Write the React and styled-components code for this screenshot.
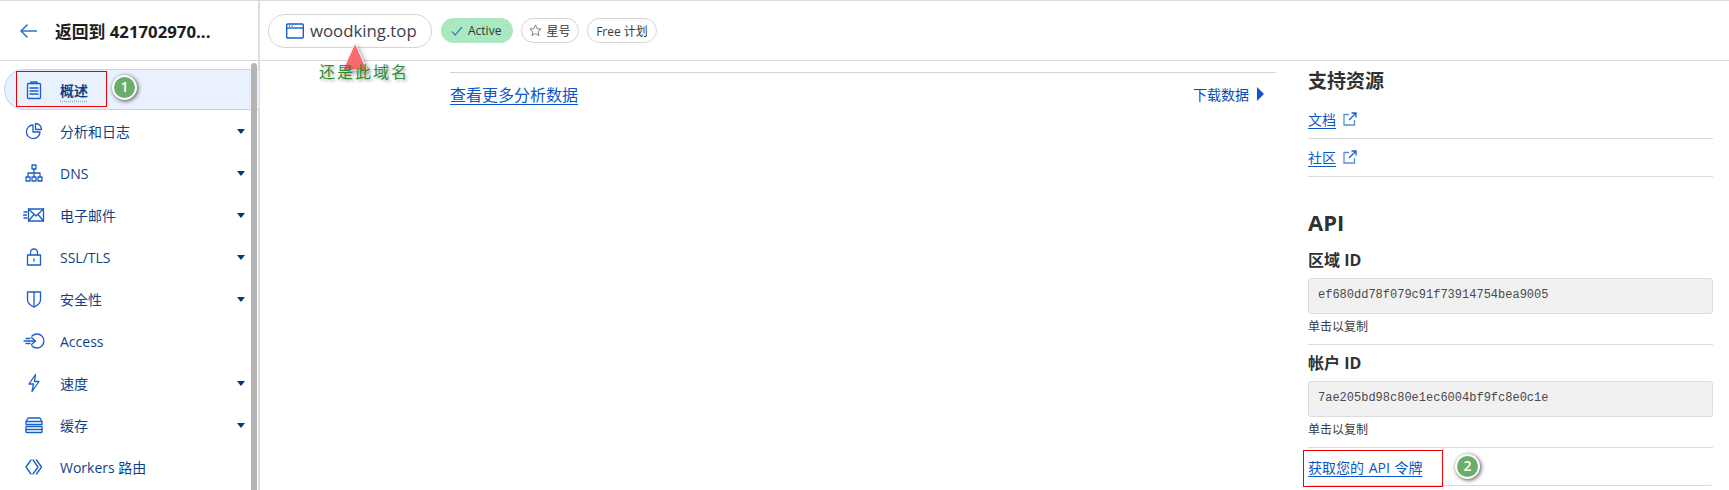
import React from 'react'
import styled, { createGlobalStyle } from 'styled-components'

const GlobalStyle = createGlobalStyle`
  html, body {
    margin: 0;
    padding: 0;
    background: #fff;
    overflow: hidden;
  }
  * {
    box-sizing: border-box;
  }
  #root {
    font-family: 'Open Sans', 'Noto Sans CJK SC', sans-serif;
  }
`

const Svg = ({ children, w = 20, h = 20, box = '0 0 20 20' }) => (
  <svg width={w} height={h} viewBox={box} fill="none" stroke="#1a5fc8" strokeWidth="1.3" strokeLinecap="round" strokeLinejoin="round">
    {children}
  </svg>
)

const icons = {
  overview: (
    <Svg>
      <rect x="3.5" y="3.5" width="13" height="15" rx="1" />
      <path d="M7 3.5V2h6v1.5M6 8h8M6 11h8M6 14h8" />
    </Svg>
  ),
  chart: (
    <Svg>
      <path d="M9 4a6.800 6.800 0 1 0 7 7H9z" />
      <path d="M11.500 2.500a6 6 0 0 1 6 6h-6z" />
    </Svg>
  ),
  dns: (
    <Svg>
      <rect x="8" y="2" width="4" height="4" />
      <rect x="2" y="14" width="4" height="4" />
      <rect x="8" y="14" width="4" height="4" />
      <rect x="14" y="14" width="4" height="4" />
      <path d="M10 6v8M4 14v-4h12v4" />
    </Svg>
  ),
  mail: (
    <Svg w={22} box="0 0 22 20">
      <rect x="5.5" y="4" width="15" height="12" />
      <path d="M5.5 4l7.5 7 7.5-7M5.5 16l5.5-6.500M20.500 16L15 9.500M1 7h3M0.500 10h3M1 13h3" />
    </Svg>
  ),
  lock: (
    <Svg>
      <rect x="3.500" y="8" width="13" height="10" />
      <path d="M6.500 8V5.500a3.500 3.500 0 0 1 7 0V8M10 12v2" />
    </Svg>
  ),
  shield: (
    <Svg>
      <path d="M3.500 3h13v7.500c0 3.500-3 6-6.500 7.500-3.500-1.500-6.500-4-6.500-7.500z" />
      <path d="M10 3v15" />
    </Svg>
  ),
  access: (
    <Svg w={22} box="0 0 22 20">
      <path d="M9 5a7 7 0 1 1 0 10M1 10h11M8.500 6.500L12.500 10l-4 3.500M3 7.500h4M3 12.500h4" />
    </Svg>
  ),
  bolt: (
    <Svg>
      <path d="M11.500 1.500L5 11h4.500L8 18.500 15 8.500h-4.500z" />
    </Svg>
  ),
  cache: (
    <Svg>
      <path d="M4 3h12l2 3.500V9.500H2V6.500zM2 6.500h16" />
      <rect x="2" y="11.500" width="16" height="6" rx="0.500" />
      <path d="M2 14.500h16" />
    </Svg>
  ),
  workers: (
    <Svg>
      <path d="M7 3l-5 7 5 7M9 3l5 7-5 7M12.500 3l5 7-5 7" />
    </Svg>
  ),
}

const navItems = [
  { label: '概述', icon: 'overview', active: true },
  { label: '分析和日志', icon: 'chart', caret: true },
  { label: 'DNS', icon: 'dns', caret: true },
  { label: '电子邮件', icon: 'mail', caret: true },
  { label: 'SSL/TLS', icon: 'lock', caret: true },
  { label: '安全性', icon: 'shield', caret: true },
  { label: 'Access', icon: 'access' },
  { label: '速度', icon: 'bolt', caret: true },
  { label: '缓存', icon: 'cache', caret: true },
  { label: 'Workers 路由', icon: 'workers' },
]

const ExternalIcon = () => (
  <svg width="14" height="14" viewBox="0 0 14 14" fill="none" stroke="#5b8fdc" strokeWidth="1.300">
    <path d="M6 2.500H1v10.500h10.500V8" />
    <path d="M6 8l7-7M8.500 1H13v4.500" stroke="#1a5fc8" />
  </svg>
)

const App = () => {
  return (
    <>
      <GlobalStyle />
      <Page>
        <Sidebar>
          <BackRow>
            <svg width="20" height="16" viewBox="0 0 20 16" fill="none" stroke="#2f6fd0" strokeWidth="1.500">
              <path d="M18 8H2M8.500 1.500L2 8l6.500 6.500" />
            </svg>
            <BackText>返回到 421702970...</BackText>
          </BackRow>
          <NavList>
            {navItems.map((item) => (
              <NavItem key={item.label} $active={item.active}>
                <NavIcon>{icons[item.icon]}</NavIcon>
                <NavLabel $active={item.active}>{item.label}</NavLabel>
                {item.caret && <Caret />}
              </NavItem>
            ))}
            <Scrollbar />
          </NavList>
        </Sidebar>
        <Body>
          <TopBar>
            <DomainChip>
              <svg width="18" height="16" viewBox="0 0 18 16" fill="none" stroke="#1a5fc8" strokeWidth="1.400">
                <rect x="0.700" y="1" width="16.600" height="14" rx="1" />
                <path d="M0.700 5h16.600" />
                <path d="M3 3h1M5.500 3h1" />
              </svg>
              woodking.top
            </DomainChip>
            <ActiveChip>
              <svg width="12" height="10" viewBox="0 0 12 10" fill="none" stroke="#1a5fc8" strokeWidth="1.100">
                <path d="M1 5.500L4.200 9 11 1" />
              </svg>
              Active
            </ActiveChip>
            <Chip $w={58}>
              <svg width="13" height="13" viewBox="0 0 14 14" fill="none" stroke="#777" strokeWidth="1">
                <path d="M7 1l1.800 4 4.200.400-3.200 2.800 1 4.300L7 10.200 3.200 12.500l1-4.300L1 5.400l4.200-.400z" />
              </svg>
              星号
            </Chip>
            <Chip $w={70}>Free 计划</Chip>
          </TopBar>
          <Content>
            <MainColumn>
              <MainRow>
                <MainLink>查看更多分析数据</MainLink>
                <DownloadLink>
                  下载数据
                  <DownloadArrow />
                </DownloadLink>
              </MainRow>
            </MainColumn>
            <SideColumn>
              <SectionTitle>支持资源</SectionTitle>
              <ResourceRow>
                <SideLink>文档</SideLink>
                <ExternalIcon />
              </ResourceRow>
              <ResourceRow>
                <SideLink>社区</SideLink>
                <ExternalIcon />
              </ResourceRow>
              <ApiTitle>API</ApiTitle>
              <IdBlock>
                <IdTitle>区域 ID</IdTitle>
                <IdBox>ef680dd78f079c91f73914754bea9005</IdBox>
                <IdHint>单击以复制</IdHint>
              </IdBlock>
              <IdBlock>
                <IdTitle>帐户 ID</IdTitle>
                <IdBox>7ae205bd98c80e1ec6004bf9fc8e0c1e</IdBox>
                <IdHint>单击以复制</IdHint>
              </IdBlock>
              <TokenRow>
                <TokenLink>获取您的 API 令牌</TokenLink>
              </TokenRow>
            </SideColumn>
          </Content>
        </Body>

        <RedBox $x={16} $y={71} $w={91} $h={36} />
        <Badge $x={112} $y={75}>1</Badge>
        <RedBox $x={1303} $y={450} $w={140} $h={37} />
        <Badge $x={1455} $y={454}>2</Badge>
        <PointerArrow viewBox="0 0 30 32" width="30" height="32">
          <path d="M15 1L28 30Q15 26 2 30Z" fill="#f96b6e" stroke="#fff" strokeWidth="1" />
        </PointerArrow>
        <Note>还是此域名</Note>
      </Page>
    </>
  )
}

export default App

const Page = styled.div`
  position: relative;
  display: flex;
  width: 1729px;
  height: 490px;
  overflow: hidden;
  border-top: 1px solid #d9d9d9;
`
const Sidebar = styled.aside`
  flex: none;
  width: 260px;
  border-right: 2px solid #dcdcdc;
  display: flex;
  flex-direction: column;
`
const BackRow = styled.div`
  display: flex;
  align-items: center;
  gap: 16px;
  height: 60px;
  padding-left: 19px;
  border-bottom: 1px solid #d9d9d9;
`
const BackText = styled.div`
  font-size: 16.800px;
  font-weight: 700;
  color: #1d1d1d;
  white-space: nowrap;
`
const NavList = styled.nav`
  position: relative;
  flex: 1;
  padding: 8px 0 0 4px;
`
const NavItem = styled.div`
  display: flex;
  align-items: center;
  height: 42px;
  padding-left: 21px;
  padding-right: 13px;
  margin-right: -1px;
  ${({ $active }) =>
    $active &&
    `
    height: 41px;
    background: #e8f1fd;
    border: 1px solid #bcd6f7;
    border-right: none;
    border-radius: 21px 0 0 21px;
    padding-left: 20px;
  `}
`
const NavIcon = styled.span`
  display: flex;
  justify-content: center;
  width: 22px;
  margin-right: 15px;
  margin-left: -2px;
`
const NavLabel = styled.span`
  flex: 1;
  font-size: 14px;
  color: #0f3f87;
  font-weight: ${({ $active }) => ($active ? 600 : 400)};
  white-space: nowrap;
  ${({ $active }) =>
    $active &&
    `
    text-decoration: underline dotted #8ab0e8;
    text-underline-offset: 5px;
  `}
`
const Caret = styled.span`
  width: 0;
  height: 0;
  border-left: 4px solid transparent;
  border-right: 4px solid transparent;
  border-top: 5px solid #003681;
  margin-right: 1px;
`
const Scrollbar = styled.div`
  position: absolute;
  top: 2px;
  bottom: 0;
  right: 1px;
  width: 6px;
  border-radius: 3px 3px 0 0;
  background: #b5b5b5;
`
const Body = styled.main`
  flex: 1;
  display: flex;
  flex-direction: column;
  min-width: 0;
`
const TopBar = styled.header`
  display: flex;
  align-items: center;
  gap: 8px;
  height: 60px;
  padding: 0 0 0 8px;
  border-bottom: 1px solid #d9d9d9;
`
const Chip = styled.span`
  display: inline-flex;
  align-items: center;
  justify-content: center;
  gap: 4px;
  width: ${({ $w }) => $w}px;
  height: 25px;
  border: 1px solid #d5d5d5;
  border-radius: 13px;
  font-size: 12px;
  color: #3a3a3a;
  white-space: nowrap;
`
const DomainChip = styled(Chip)`
  justify-content: flex-start;
  gap: 6px;
  width: 164px;
  height: 34px;
  padding: 0 0 0 17px;
  border-radius: 17px;
  font-size: 16.800px;
  color: #3b4151;
  margin-right: 1px;
`
const ActiveChip = styled(Chip)`
  justify-content: flex-start;
  width: 72px;
  gap: 5px;
  padding: 0 0 0 10px;
  border: none;
  background: #a9e8c0;
  color: #2b3a33;
`
const Content = styled.div`
  flex: 1;
  display: flex;
  padding: 11px 16px 0 190px;
  gap: 32px;
`
const MainColumn = styled.section`
  width: 826px;
  flex: none;
`
const MainRow = styled.div`
  display: flex;
  align-items: center;
  justify-content: space-between;
  height: 42px;
  padding-right: 12px;
  border-top: 1px solid #d4d4d4;
`
const MainLink = styled.a`
  font-size: 16px;
  color: #0b57c9;
  text-decoration: underline;
  text-underline-offset: 3px;
`
const DownloadLink = styled.a`
  display: inline-flex;
  align-items: center;
  gap: 8px;
  font-size: 14px;
  color: #0b4bb0;
`
const DownloadArrow = styled.span`
  width: 0;
  height: 0;
  border-top: 7px solid transparent;
  border-bottom: 7px solid transparent;
  border-left: 7px solid #0b57c9;
`
const SideColumn = styled.section`
  flex: 1;
  margin-top: -11px;
`
const SectionTitle = styled.h2`
  margin: 0;
  height: 40px;
  padding-top: 1px;
  line-height: 39px;
  font-size: 19px;
  font-weight: 700;
  color: #313131;
`
const ResourceRow = styled.div`
  display: flex;
  align-items: center;
  gap: 7px;
  height: 38px;
  padding-bottom: 2px;
  border-bottom: 1px solid #d9d9d9;
`
const SideLink = styled.a`
  font-size: 14px;
  color: #0b57c9;
  text-decoration: underline;
  text-underline-offset: 3px;
  white-space: nowrap;
`
const TokenLink = styled(SideLink)`
  word-spacing: 1px;
`
const ApiTitle = styled.h2`
  margin: 0;
  padding-top: 30px;
  height: 65px;
  line-height: 30px;
  font-size: 22px;
  font-weight: 700;
  color: #313131;
`
const IdBlock = styled.div`
  height: 103px;
  border-bottom: 1px solid #d9d9d9;
`
const IdTitle = styled.div`
  height: 36px;
  line-height: 36px;
  font-size: 16px;
  font-weight: 700;
  color: #313131;
`
const IdBox = styled.div`
  height: 36px;
  line-height: 33px;
  padding-left: 9px;
  background: #f1f1f1;
  border: 1px solid #dcdcdc;
  border-radius: 3px;
  font-family: 'Liberation Mono', monospace;
  font-size: 12px;
  color: #4a4a4a;
`
const IdHint = styled.div`
  margin-top: 3px;
  font-size: 12px;
  line-height: 20px;
  color: #3c3c3c;
`
const TokenRow = styled.div`
  display: flex;
  align-items: center;
  height: 38px;
  border-bottom: 1px solid #d9d9d9;
  border-radius: 0 0 4px 4px;
`
const RedBox = styled.div`
  position: absolute;
  left: ${({ $x }) => $x}px;
  top: ${({ $y }) => $y - 1}px;
  width: ${({ $w }) => $w}px;
  height: ${({ $h }) => $h}px;
  border: 1px solid #f00000;
`
const Badge = styled.div`
  position: absolute;
  left: ${({ $x }) => $x}px;
  top: ${({ $y }) => $y - 1}px;
  width: 25px;
  height: 25px;
  border-radius: 50%;
  border: 2px solid #fff;
  background: #69ae69;
  box-shadow: 1px 1px 4px rgba(0, 0, 0, 0.7);
  color: #fff;
  font-size: 14px;
  font-weight: 600;
  line-height: 20px;
  text-align: center;
`
const PointerArrow = styled.svg`
  position: absolute;
  left: 340px;
  top: 41px;
  filter: drop-shadow(2px 2px 2px rgba(0, 0, 0, 0.35));
`
const Note = styled.div`
  position: absolute;
  left: 319px;
  top: 58px;
  font-family: 'Noto Sans CJK SC', sans-serif;
  font-size: 16px;
  letter-spacing: 2px;
  color: #2e8f2e;
  text-shadow: 2px 2px 3px rgba(0, 0, 0, 0.3);
  white-space: nowrap;
`
